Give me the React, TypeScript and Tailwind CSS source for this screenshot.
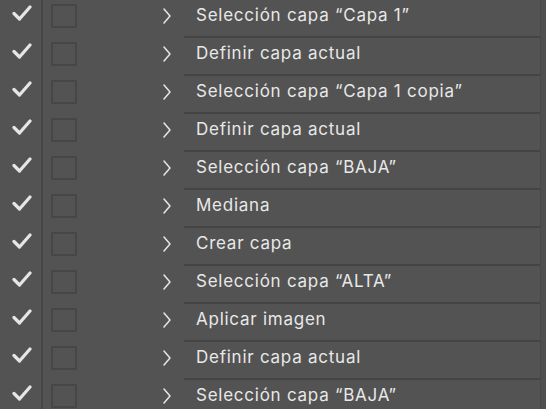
import React from "react";

const rows = [
  "Selección capa “Capa 1”",
  "Definir capa actual",
  "Selección capa “Capa 1 copia”",
  "Definir capa actual",
  "Selección capa “BAJA”",
  "Mediana",
  "Crear capa",
  "Selección capa “ALTA”",
  "Aplicar imagen",
  "Definir capa actual",
  "Selección capa “BAJA”",
];

function Check() {
  return (
    <svg width="20" height="18" viewBox="0 0 20 18" className="block">
      <path d="M2 9.5 L7.5 15 L18 3" fill="none" stroke="#e6e6e6" strokeWidth="3.2" strokeLinecap="round" strokeLinejoin="round" />
    </svg>
  );
}

function Chevron() {
  return (
    <svg width="10" height="16" viewBox="0 0 10 16" className="block">
      <path d="M2 1 L8 8 L2 15" fill="none" stroke="#e6e6e6" strokeWidth="1.5" strokeLinecap="round" strokeLinejoin="round" />
    </svg>
  );
}

export default function App() {
  return (
    <div
      className="w-[546px] h-[409px] overflow-hidden bg-[#535353] flex"
      style={{ fontFamily: 'Inter, "Liberation Sans", Arial, sans-serif' }}
    >
      <div className="flex-1 flex flex-col">
        {rows.map((r, i) => (
          <div key={i} className="h-[38px] shrink-0 flex">
            <div className="w-[41px] shrink-0 flex items-start justify-center pt-[4px] pl-[2px]">
              <Check />
            </div>
            <div className="w-[2px] shrink-0 bg-[#464646]" />
            <div className="w-[141px] shrink-0 flex items-start pt-[4px]">
              <div className="ml-[8px] w-[26px] h-[24px] border-2 border-[#474747]" />
              <div className="ml-[85px] mt-[4px]">
                <Chevron />
              </div>
            </div>
            <div className="flex-1 flex flex-col">
              <div className="h-[36px] flex items-center pl-[12px] pb-[4px] text-[17px] text-[#e8e8e8] tracking-[0.75px]">
                {r}
              </div>
              <div className="h-[2px] bg-[#444444]" />
            </div>
          </div>
        ))}
      </div>
      <div className="w-[1px] bg-[#4a4a4a]" />
      <div className="w-[5px] bg-[#4f4f4f]" />
    </div>
  );
}
